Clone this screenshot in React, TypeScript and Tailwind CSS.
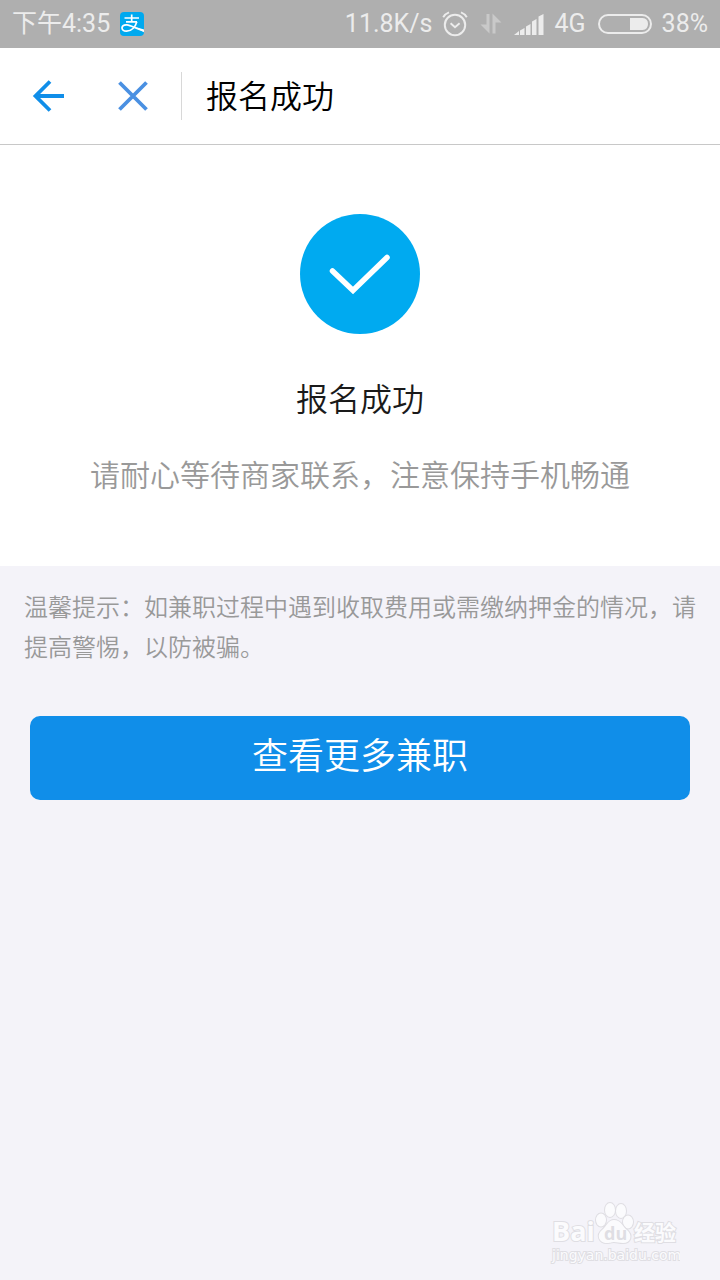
function AlipayIcon() {
  return (
    <svg width="24" height="24" viewBox="0 0 24 24" fill="none" role="img" aria-label="支付宝">
      <rect width="24" height="24" rx="4" fill="#00a9ef" />
      <path d="M4.5 6H19M11.7 2.5V9.6M6 9.8H17" stroke="#fff" strokeWidth="1.7" />
      <path
        d="M16.8 9.8C15.5 14.5 12 19.2 6.6 19.2C3.4 19.2 1.8 17.6 2 15.7C2.3 13.5 4.6 12.7 7 12.9C11 13.3 16 16.8 23 18.6"
        stroke="#fff"
        strokeWidth="1.7"
      />
      <path d="M14 14.6L24 17.4V20.2Z" fill="#fff" />
    </svg>
  )
}

function AlarmIcon() {
  return (
    <svg width="26" height="26" viewBox="0 0 26 26" fill="none" stroke="#ececec" aria-hidden="true">
      <circle cx="13" cy="14" r="10.2" strokeWidth="2" />
      <path d="M1.2 6.2Q3 3 7 1.4M24.8 6.2Q23 3 19 1.4" strokeWidth="1.9" />
      <path d="M8.6 12.2L13 16.2L17.6 12.2" strokeWidth="1.9" />
    </svg>
  )
}

function DataIcon() {
  return (
    <svg width="22" height="22" viewBox="0 0 22 22" fill="#c9c9c9" aria-hidden="true">
      <path d="M6.5 1H9.5V20.5L0.5 11.5H6.5Z" />
      <path d="M12.5 20.5H15.5V9.5H21.5L12.5 0.5Z" />
    </svg>
  )
}

function SignalIcon() {
  return (
    <svg width="30" height="21" viewBox="0 0 30 21" fill="#ececec" aria-hidden="true">
      <path d="M0 21L5 17V21ZM6 16.5L10.5 14V21H6ZM12 12.5L16.5 10V21H12ZM18 7.5L22.5 5V21H18ZM24.5 2.5L29.5 0V21H24.5Z" />
    </svg>
  )
}

function BatteryIcon() {
  return (
    <svg width="54" height="20" viewBox="0 0 54 20" aria-hidden="true">
      <rect x="1" y="1" width="52" height="18" rx="9" fill="none" stroke="#ececec" strokeWidth="2" />
      <path d="M32 4H44.5Q50 4.5 50 10Q50 15.5 44.5 16H32Z" fill="#ececec" />
    </svg>
  )
}

function StatusBar() {
  return (
    <div className="flex h-12 items-center justify-between bg-[#afafaf] px-3 text-[25px] leading-8 font-normal text-[#ececec]">
      <div className="flex items-center gap-2.5">
        <span>下午4:35</span>
        <AlipayIcon />
      </div>
      <div className="flex items-center">
        <span>11.8K/s</span>
        <div className="flex items-center gap-3 px-2.5">
          <AlarmIcon />
          <DataIcon />
          <SignalIcon />
        </div>
        <span>4G</span>
        <div className="pl-3 pr-2.5">
          <BatteryIcon />
        </div>
        <span>38%</span>
      </div>
    </div>
  )
}

function Header() {
  return (
    <header className="flex h-[97px] items-center border-b border-[#c8c8c8] bg-white px-8">
      <button type="button" aria-label="返回">
        <svg width="32" height="32" viewBox="0 0 32 32" fill="none" stroke="#108ee9" strokeWidth="3.8">
          <path d="M32 16H4M18 1.5L3.5 16L18 30.5" />
        </svg>
      </button>
      <button type="button" aria-label="关闭" className="ml-[54px]">
        <svg width="30" height="30" viewBox="0 0 30 30" fill="none" stroke="#4a90e2" strokeWidth="3.8">
          <path d="M1.5 1.5L28.5 28.5M28.5 1.5L1.5 28.5" />
        </svg>
      </button>
      <div className="ml-[33px] h-12 w-px bg-[#d8d8d8]" />
      <h1 className="ml-6 pt-0.5 text-[32px] leading-10 text-black">报名成功</h1>
    </header>
  )
}

function Watermark() {
  return (
    <footer className="mt-auto flex justify-end px-10 pb-3">
      <svg width="130" height="66" viewBox="0 0 130 66" fill="#fbfbfd" stroke="#dfdee3" strokeWidth="2" paintOrder="stroke">
        <text x="2" y="39" fontFamily="Open Sans" fontSize="27" fontWeight="700">Bai</text>
        <ellipse cx="51" cy="18" rx="5" ry="6.5" />
        <ellipse cx="60" cy="8" rx="5" ry="7" />
        <ellipse cx="71" cy="9" rx="5" ry="7" />
        <ellipse cx="78" cy="20" rx="5" ry="6.5" />
        <path d="M64 18C58 18 57 24 52 28C46 33 49 41 57 41C61 41 62 40 64 40C67 40 69 41 73 41C81 41 83 33 77 28C72 24 71 18 64 18Z" />
        <text x="54" y="38" fontFamily="Open Sans" fontSize="18" fontWeight="700" fill="#dfdee3" stroke="none">du</text>
        <text x="84" y="38" fontFamily="Noto Sans CJK SC" fontSize="21" fontWeight="700">经验</text>
        <text x="2" y="58" fontFamily="DejaVu Sans" fontSize="14" fontWeight="400">jingyan.baidu.com</text>
      </svg>
    </footer>
  )
}

export default function App() {
  return (
    <div className="flex min-h-screen flex-col bg-[#f4f3f9] font-['Roboto','Noto_Sans_CJK_SC',sans-serif] font-[350]">
      <StatusBar />
      <Header />
      <main>
        <section className="flex flex-col items-center bg-white px-6 pt-[69px] pb-[70px] text-center">
          <svg width="120" height="120" viewBox="0 0 120 120" fill="none" aria-hidden="true">
            <circle cx="60" cy="60" r="60" fill="#00aaf0" />
            <path d="M32.5 57L53 76.5L87 43.5" stroke="#fff" strokeWidth="5.5" strokeLinecap="round" />
          </svg>
          <h2 className="mt-[46px] text-[32px] leading-10 text-[#1a1a1a]">报名成功</h2>
          <p className="mt-9 text-[30px] leading-10 text-[#999999]">请耐心等待商家联系，注意保持手机畅通</p>
        </section>
        <p className="px-6 pt-[22px] text-2xl leading-10 text-[#999999]">
          温馨提示：如兼职过程中遇到收取费用或需缴纳押金的情况，请提高警惕，以防被骗。
        </p>
        <div className="px-[30px] pt-12">
          <button type="button" className="h-21 w-full rounded-[10px] bg-[#108ee9] pb-0.5 text-4xl text-white">
            查看更多兼职
          </button>
        </div>
      </main>
      <Watermark />
    </div>
  )
}
